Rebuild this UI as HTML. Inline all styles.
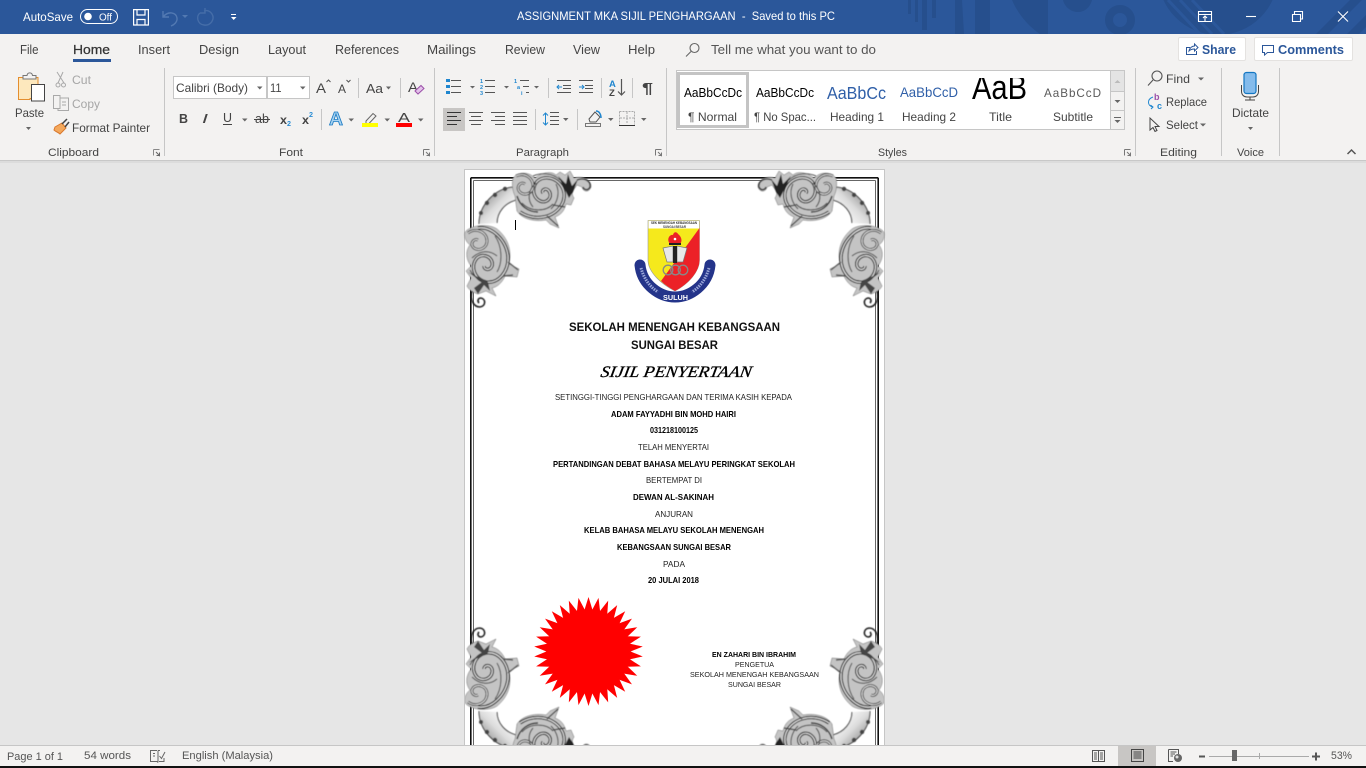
<!DOCTYPE html>
<html><head><meta charset="utf-8"><title>Word</title>
<style>
html,body{margin:0;padding:0;width:1366px;height:768px;overflow:hidden;background:#e6e6e6}
svg{display:block}
text{font-family:"Liberation Sans",sans-serif;font-size:12px;fill:#444;white-space:pre}
.t{fill:#fff}
.tab{font-size:12.5px;fill:#444}
.lab{font-size:11px;fill:#444}
.sm{font-size:12px;fill:#444}
.dim{fill:#a6a6a6}
.d1{font-size:8.5px;fill:#222}
.d2{font-size:8.5px;fill:#000;font-weight:bold}
.d3{font-size:7.5px;fill:#222}
.ic{fill:none;stroke:#555;stroke-width:1}
.st{font-size:12px;fill:#555}
</style></head><body>
<svg width="1366" height="768" viewBox="0 0 1366 768" xmlns="http://www.w3.org/2000/svg">
<defs>
<clipPath id="tb"><rect x="0" y="0" width="1366" height="34"/></clipPath>
<clipPath id="pg"><rect x="465" y="170" width="419" height="575"/></clipPath>
<filter id="soft" x="-5%" y="-5%" width="110%" height="110%"><feGaussianBlur stdDeviation="0.45"/></filter>
<linearGradient id="arc" x1="0" y1="0" x2="1" y2="1"><stop offset="0" stop-color="#666"/><stop offset=".5" stop-color="#ddd"/><stop offset=".85" stop-color="#fff"/><stop offset="1" stop-color="#888"/></linearGradient>
<path id="spA" d="M520 212C535 222 556 218 563 202C568 188 556 176 544 178C532 180 530 196 540 201C547 204 553 197 549 191C546 187 541 190 543 193"/>
<path id="spA2" d="M516 176C525 172 533 178 533 186C533 194 523 197 519 191C516 186 521 181 525 184"/>
<path id="spB" d="M478 228C492 226 506 240 508 256C509 272 498 284 486 282C474 279 470 266 477 258C484 252 494 258 492 266C490 271 484 270 484 266"/>
<path id="spB2" d="M468 233C476 227 487 232 487 241C487 249 477 252 473 247C470 243 474 238 478 240"/>
<g id="corner" filter="url(#soft)">
<path d="M479 224C479 205 495 188 514 187L516 200C505 203 497 212 497 223Z" fill="url(#arc)"/>
<path d="M479 224C479 205 495 188 514 187M516 200C505 203 497 212 497 223" fill="none" stroke="#333" stroke-width="1"/>
<g fill="#444"><circle cx="481" cy="213" r="2"/><circle cx="487" cy="203" r="2.200"/><circle cx="495" cy="195" r="2.200"/><circle cx="505" cy="189" r="2.200"/></g>
<path d="M513 178C518 172 528 171 535 178C542 172 552 171 556 175L560 172L565 175L570 171L574 178C582 175 592 180 591 187C589 193 583 192 582 187L577 185C574 190 570 192 574 198L571 205L566 204C564 212 560 215 555 217L559 228L550 224L546 220C534 222 522 219 517 211L515 196C512 190 512 183 513 178Z" fill="#c4c4c4" stroke="#666" stroke-width=".5"/>
<use href="#spA" fill="none" stroke="#1c1c1c" stroke-width="3.400"/>
<use href="#spA" fill="none" stroke="#e2e2e2" stroke-width="1.200"/>
<use href="#spA2" fill="none" stroke="#2a2a2a" stroke-width="2.800"/>
<use href="#spA2" fill="none" stroke="#e8e8e8" stroke-width="1"/>
<path d="M522 203C530 212 546 212 553 204M536 183C528 190 527 200 533 207M556 184C560 192 558 202 551 209" fill="none" stroke="#444" stroke-width="1"/>
<path d="M517 196C520 206 528 212 538 212" fill="none" stroke="#333" stroke-width="1.400"/>
<path d="M533 176C540 173 552 172 560 180" fill="none" stroke="#555" stroke-width="1"/>
<path d="M569 198L558 176L566 184L568 174L572 186L578 179L573 192Z" fill="#222"/>
<path d="M577 180C584 177 591 181 590 187C588 191 584 190 583 187" fill="none" stroke="#333" stroke-width="1.400"/>
<path d="M553 205L565 207M547 216L558 226" stroke="#444" stroke-width="1.200" fill="none"/>
<path d="M465 232C472 224 490 224 497 229C508 238 512 250 509 264L519 269L517 277L505 276C502 283 497 287 492 288L496 296L486 291L478 294C472 292 469 290 467 286L471 278L466 271L471 266C465 258 466 250 470 245C465 241 464 236 465 232Z" fill="#c4c4c4" stroke="#666" stroke-width=".5"/>
<use href="#spB" fill="none" stroke="#1c1c1c" stroke-width="3.400"/>
<use href="#spB" fill="none" stroke="#e2e2e2" stroke-width="1.200"/>
<use href="#spB2" fill="none" stroke="#2a2a2a" stroke-width="2.800"/>
<use href="#spB2" fill="none" stroke="#e8e8e8" stroke-width="1"/>
<path d="M495 236C502 246 503 262 497 272M472 258C480 250 490 250 497 256M470 270C473 276 478 280 484 280" fill="none" stroke="#444" stroke-width="1"/>
<path d="M508 262L518 270M503 276L513 275" stroke="#555" stroke-width="1.400" fill="none"/>
<path d="M468 272L482 282L474 288L478 294L484 285L490 291L488 282Z" fill="#444"/>
<path d="M472 291C470 299 473 307 480 307C486 306 486 299 481 298C478 298 477 301 479 303" fill="none" stroke="#222" stroke-width="1.600"/>
</g>
<polygon id="sp" points="-4.200,-41 0,-54.500 4.200,-41"/>
</defs>

<!-- background regions -->
<rect x="0" y="0" width="1366" height="768" fill="#e6e6e6"/>
<rect x="0" y="0" width="1366" height="34" fill="#2b579a"/>
<rect x="0" y="34" width="1366" height="126" fill="#f3f2f1"/>
<rect x="0" y="160" width="1366" height="1" fill="#c8c8c8"/>
<rect x="0" y="161" width="1366" height="2" fill="#dcdcdc"/>

<!-- title bar pattern -->
<g clip-path="url(#tb)">
<g fill="#264f8d">
<rect x="908" y="0" width="3" height="14"/><rect x="915" y="0" width="3" height="22"/><rect x="922" y="0" width="5" height="30"/><rect x="932" y="0" width="4" height="18"/>
<path d="M955 0H962L964 34H955Z"/><rect x="975" y="0" width="15" height="34"/><path d="M1012 0H1048V34H1040C1028 26 1018 14 1012 0Z"/>
<path d="M1063 0C1065 8 1072 12 1078 12C1084 12 1090 8 1092 0Z"/>
<circle cx="1120" cy="20" r="11" fill="none" stroke="#264f8d" stroke-width="8"/>
<circle cx="1218" cy="-25" r="60"/>
<path d="M1347 34L1366 15V27L1359 34Z"/><path d="M1328 34L1362 0H1350L1316 34Z"/>
</g>
<path d="M1168 0L1200 34M1180 0L1212 34M1192 0L1224 34" stroke="#2b579a" stroke-width="3" fill="none"/>
</g>

<!-- title bar items -->
<text x="23" y="21" class="t" textLength="50" lengthAdjust="spacingAndGlyphs">AutoSave</text>
<rect x="80.500" y="9.500" width="37" height="14" rx="7" fill="none" stroke="#fff"/>
<circle cx="88" cy="16.500" r="3.800" fill="#fff"/>
<text x="99" y="20.500" class="t" style="font-size:10px" textLength="13" lengthAdjust="spacingAndGlyphs">Off</text>
<g fill="none" stroke="#fff" stroke-width="1.200"><path d="M133.600 9.600H148.400V25H133.600Z"/><path d="M137 9.600V15H145V9.600M137 25V19.500H145V25"/></g>
<g fill="none" stroke="#5279b2" stroke-width="1.400"><path d="M163 11V17H169M163.500 16.500C168 11 176 12 177 18C177.500 22 174 25 171 26"/><path d="M200 13C196 16 197 24 204 25C211 26 215 19 212 14C210 11 207 10 204 11M205 8V13H200" stroke="#456da8"/></g>
<path d="M182 15H188L185 18Z" fill="#5279b2"/>
<path d="M231 14.500H236" stroke="#fff"/><path d="M231 17H236.500L233.700 20Z" fill="#fff"/>
<text x="517" y="20" class="t" textLength="318" lengthAdjust="spacingAndGlyphs">ASSIGNMENT MKA SIJIL PENGHARGAAN  -  Saved to this PC</text>
<g fill="none" stroke="#fff" stroke-width="1.100">
<path d="M1198.500 11.500H1211.500V21.500H1198.500ZM1198.500 14.500H1211.500"/><path d="M1205 21V16M1203 18L1205 16L1207 18"/>
<path d="M1246 16.500H1256"/>
<path d="M1292.500 14.500H1300.500V21.500H1292.500ZM1294.500 14V11.500H1302.500V19H1300.500"/>
<path d="M1338 11.500L1348 21.500M1348 11.500L1338 21.500"/>
</g>

<!-- tabs -->
<text x="20" y="54" class="tab" textLength="18.500" lengthAdjust="spacingAndGlyphs">File</text>
<text x="73" y="54" class="tab" textLength="37" lengthAdjust="spacingAndGlyphs" style="fill:#333;stroke:#333;stroke-width:.25">Home</text>
<rect x="73" y="59" width="38" height="3" fill="#2b579a"/>
<text x="138" y="54" class="tab" textLength="32" lengthAdjust="spacingAndGlyphs">Insert</text>
<text x="199" y="54" class="tab" textLength="40" lengthAdjust="spacingAndGlyphs">Design</text>
<text x="268" y="54" class="tab" textLength="38" lengthAdjust="spacingAndGlyphs">Layout</text>
<text x="335" y="54" class="tab" textLength="64" lengthAdjust="spacingAndGlyphs">References</text>
<text x="427" y="54" class="tab" textLength="49" lengthAdjust="spacingAndGlyphs">Mailings</text>
<text x="505" y="54" class="tab" textLength="40" lengthAdjust="spacingAndGlyphs">Review</text>
<text x="573" y="54" class="tab" textLength="27" lengthAdjust="spacingAndGlyphs">View</text>
<text x="628" y="54" class="tab" textLength="27" lengthAdjust="spacingAndGlyphs">Help</text>
<g fill="none" stroke="#666" stroke-width="1.100"><circle cx="694.500" cy="48" r="4.500"/><path d="M691 51.500L686 56.500"/></g>
<text x="711" y="54" class="tab" textLength="165" lengthAdjust="spacingAndGlyphs" style="fill:#555">Tell me what you want to do</text>

<!-- share/comments -->
<rect x="1178.500" y="37.500" width="67" height="23" rx="1.500" fill="#fff" stroke="#e4e2e0"/>
<rect x="1254.500" y="37.500" width="98" height="23" rx="1.500" fill="#fff" stroke="#e4e2e0"/>
<g fill="none" stroke="#2b579a" stroke-width="1"><path d="M1190 47.500H1186.500V54.500H1196.500V51"/><path d="M1189 51C1189.500 48 1192 46 1194.500 46V44L1198 47.500L1194.500 51V49C1192.500 49 1190.500 49.500 1189 51Z"/><path d="M1262.500 45.500H1273.500V52.500H1267.500L1264.500 55V52.500H1262.500Z"/></g>
<text x="1202" y="54" style="font-size:13px;font-weight:bold;fill:#2b579a" textLength="34" lengthAdjust="spacingAndGlyphs">Share</text>
<text x="1278" y="54" style="font-size:13px;font-weight:bold;fill:#2b579a" textLength="66" lengthAdjust="spacingAndGlyphs">Comments</text>

<!-- separators -->
<g fill="#c6c6c6"><rect x="164" y="68" width="1" height="88"/><rect x="434" y="68" width="1" height="88"/><rect x="666" y="68" width="1" height="88"/><rect x="1135" y="68" width="1" height="88"/><rect x="1221" y="68" width="1" height="88"/><rect x="1279" y="68" width="1" height="88"/></g>

<!-- clipboard -->
<path d="M18.500 77.500H38V98.500H30V99.500H18.500Z" fill="#fde8bd" stroke="#e48e2e"/>
<path d="M23 75.500H27C27.500 72 32 72 32.500 75.500H36V79H23Z" fill="#f3f2f1" stroke="#777"/>
<rect x="31.500" y="84.500" width="13" height="16.500" fill="#fff" stroke="#444"/>
<text x="15" y="117" class="sm" textLength="29" lengthAdjust="spacingAndGlyphs">Paste</text>
<path d="M26 127H31L28.500 130Z" fill="#666"/>
<g fill="none" stroke="#a9a9a9"><path d="M57 72L64 83M63 72L58 83"/><circle cx="58" cy="85" r="2"/><circle cx="63.500" cy="85" r="2"/><path d="M53.500 95.500H60V108.500H53.500ZM60 98H68.500V110.500H58V108.500M62 102H66M62 105H66"/></g>
<text x="72" y="84" class="sm dim" textLength="19" lengthAdjust="spacingAndGlyphs">Cut</text>
<text x="72" y="108" class="sm dim" textLength="28" lengthAdjust="spacingAndGlyphs">Copy</text>
<path d="M55 127L62 123L66 128L60 134C58 132 56 132 54 130Z" fill="#f4a85c" stroke="#d9782d"/>
<path d="M62 124L67 119M65 127L69 122" stroke="#444" stroke-width="1.500"/>
<text x="72" y="132" class="sm" textLength="78" lengthAdjust="spacingAndGlyphs">Format Painter</text>
<text x="48" y="156" class="lab" textLength="51" lengthAdjust="spacingAndGlyphs">Clipboard</text>
<path d="M153.500 149.500H159.500M153.500 149.500V155.500" fill="none" stroke="#888"/><path d="M156 152L159.500 155.500V152.500M159.500 155.500H156.500" stroke="#666" fill="none"/>

<!-- font -->
<rect x="173.500" y="76.500" width="93" height="22" fill="#fff" stroke="#c6c6c6"/>
<rect x="267.500" y="76.500" width="42" height="22" fill="#fff" stroke="#c6c6c6"/>
<text x="176" y="92" class="sm" textLength="72" lengthAdjust="spacingAndGlyphs">Calibri (Body)</text>
<text x="270" y="92" class="sm" textLength="11.500" lengthAdjust="spacingAndGlyphs">11</text>
<path d="M257 86.500H262.500L259.800 89.500ZM300 86.500H305.500L302.800 89.500Z" fill="#666"/>
<text x="316" y="93" style="font-size:14px" textLength="10" lengthAdjust="spacingAndGlyphs">A</text>
<path d="M326.500 82L328.500 80L330.500 82" class="ic"/>
<text x="338" y="93" style="font-size:11.500px" textLength="8" lengthAdjust="spacingAndGlyphs">A</text>
<path d="M346.500 80L348.500 82L350.500 80" class="ic"/>
<rect x="358" y="78" width="1" height="20" fill="#c6c6c6"/>
<text x="366" y="93" style="font-size:13px" textLength="17" lengthAdjust="spacingAndGlyphs">Aa</text>
<path d="M386 86.500H391L388.500 89.500Z" fill="#666"/>
<rect x="400" y="78" width="1" height="20" fill="#c6c6c6"/>
<text x="408" y="92" style="font-size:14px" textLength="10" lengthAdjust="spacingAndGlyphs">A</text>
<path d="M415 91L421 85.500L424 88.500L418 94Z" fill="#e3c3ea" stroke="#9b4fa8"/>
<text x="179" y="123" style="font-weight:bold;font-size:12.500px;fill:#444" textLength="9" lengthAdjust="spacingAndGlyphs">B</text>
<text x="202" y="123" style="font-style:italic;font-size:12.500px" textLength="6" lengthAdjust="spacingAndGlyphs">I</text>
<text x="223" y="122" style="font-size:12.500px" textLength="9" lengthAdjust="spacingAndGlyphs">U</text>
<rect x="223" y="124" width="9" height="1" fill="#444"/>
<path d="M242 118.500H247.500L244.800 121.500Z" fill="#666"/>
<text x="255" y="123" style="font-size:12.500px" textLength="14" lengthAdjust="spacingAndGlyphs">ab</text>
<rect x="254" y="119" width="16" height="1" fill="#444"/>
<text x="280" y="124" style="font-weight:bold;font-size:11.500px" textLength="7" lengthAdjust="spacingAndGlyphs">x</text>
<text x="287" y="126" style="font-size:7px;fill:#2a8dd4;font-weight:bold" textLength="4" lengthAdjust="spacingAndGlyphs">2</text>
<text x="302" y="124" style="font-weight:bold;font-size:11.500px" textLength="7" lengthAdjust="spacingAndGlyphs">x</text>
<text x="309" y="117" style="font-size:7px;fill:#2a8dd4;font-weight:bold" textLength="4" lengthAdjust="spacingAndGlyphs">2</text>
<rect x="321" y="109" width="1" height="21" fill="#c6c6c6"/>
<text x="329" y="125" style="font-size:18px;font-weight:bold;fill:#a8d3f1;stroke:#1b7bc4;stroke-width:.8" textLength="14" lengthAdjust="spacingAndGlyphs">A</text>
<path d="M348.500 118.500H354L351.200 121.500Z" fill="#666"/>
<path d="M366 121L373 113.500L376 116L369 123.500H366Z" fill="#f3f2f1" stroke="#666"/>
<rect x="362" y="123" width="16" height="4" fill="#ffff00"/>
<path d="M384.500 118.500H390L387.200 121.500Z" fill="#666"/>
<text x="398" y="122" style="font-size:13px" textLength="12" lengthAdjust="spacingAndGlyphs">A</text>
<rect x="396" y="123" width="16" height="4" fill="#ff0000"/>
<path d="M418 118.500H423.500L420.800 121.500Z" fill="#666"/>
<text x="279" y="156" class="lab" textLength="24" lengthAdjust="spacingAndGlyphs">Font</text>
<path d="M423.500 149.500H429.500M423.500 149.500V155.500M426 152L429.500 155.500V152.500M429.500 155.500H426.500" stroke="#777" fill="none"/>

<!-- paragraph -->
<g fill="#1f86cf"><rect x="446" y="79" width="4" height="3"/><rect x="446" y="85" width="4" height="3"/><rect x="446" y="91" width="4" height="3"/></g>
<path d="M451 80.500H461M451 86.500H461M451 92.500H461" stroke="#555"/>
<path d="M470 86H475L472.500 88.500ZM504 86H509L506.500 88.500ZM534 86H539L536.500 88.500Z" fill="#666"/>
<g style="font-weight:bold"><text x="480" y="83" style="font-size:5.500px;fill:#1f86cf">1</text><text x="480" y="89" style="font-size:5.500px;fill:#1f86cf">2</text><text x="480" y="95" style="font-size:5.500px;fill:#1f86cf">3</text></g>
<path d="M485 80.500H495M485 86.500H495M485 92.500H495" stroke="#555"/>
<text x="514" y="83" style="font-size:5.500px;fill:#1f86cf;font-weight:bold">1</text><text x="517" y="89" style="font-size:5.500px;fill:#1f86cf;font-weight:bold">a</text><text x="521" y="95" style="font-size:5.500px;fill:#1f86cf;font-weight:bold">i</text>
<path d="M520 80.500H529M523 86.500H529M526 92.500H529" stroke="#555"/>
<rect x="548" y="78" width="1" height="20" fill="#c6c6c6"/>
<path d="M557 80.500H571M563 85.500H571M563 88.500H571M557 92.500H571" stroke="#555"/><path d="M562 87H557M559 85L557 87L559 89" stroke="#1f86cf" fill="none"/>
<path d="M579 80.500H593M585 85.500H593M585 88.500H593M579 92.500H593" stroke="#555"/><path d="M579 87H584M582 85L584 87L582 89" stroke="#1f86cf" fill="none"/>
<rect x="601" y="78" width="1" height="20" fill="#c6c6c6"/>
<text x="609" y="87" style="font-size:9.500px;font-weight:bold;fill:#1f86cf">A</text>
<text x="609" y="96" style="font-size:9.500px;font-weight:bold;fill:#444">Z</text>
<path d="M621.500 79V95M618 91.500L621.500 95L625 91.500" stroke="#555" fill="none" stroke-width="1.200"/>
<rect x="632" y="78" width="1" height="20" fill="#c6c6c6"/>
<text x="642" y="93" style="font-size:15px;font-weight:bold;fill:#444" textLength="11" lengthAdjust="spacingAndGlyphs">¶</text>
<rect x="443" y="108" width="22" height="23" fill="#c8c6c4"/>
<path d="M447 112.500H461M447 116.500H457M447 120.500H461M447 124.500H457" stroke="#333"/>
<path d="M469 112.500H483M471 116.500H481M469 120.500H483M471 124.500H481M491 112.500H505M495 116.500H505M491 120.500H505M495 124.500H505M513 112.500H527M513 116.500H527M513 120.500H527M513 124.500H527" stroke="#555"/>
<rect x="535" y="109" width="1" height="21" fill="#c6c6c6"/>
<path d="M545.500 113V125M543 115.500L545.500 113L548 115.500M543 122.500L545.500 125L548 122.500" stroke="#1f86cf" fill="none"/>
<path d="M550 112.500H559M550 116.500H559M550 120.500H559M550 124.500H559" stroke="#555"/>
<path d="M563 118H568.500L565.800 121Z" fill="#666"/>
<rect x="577" y="109" width="1" height="21" fill="#c6c6c6"/>
<path d="M589 119L595 112L600 117L596 122H590Z" fill="#f3f2f1" stroke="#555"/>
<path d="M596 111C599 111 601 114 601 118" fill="none" stroke="#1f86cf" stroke-width="1.500"/>
<rect x="585.500" y="123.500" width="15" height="3" fill="#f3f2f1" stroke="#777"/>
<path d="M608 118H613.500L610.800 121Z" fill="#666"/>
<path d="M619.500 111.500H634.500V124.500M619.500 111.500V124.500M627 112V124M620 118H634" fill="none" stroke="#aaa" stroke-dasharray="2 1"/>
<path d="M619 125.500H635" stroke="#333"/>
<path d="M641 118H646.500L643.800 121Z" fill="#666"/>
<text x="516" y="156" class="lab" textLength="53" lengthAdjust="spacingAndGlyphs">Paragraph</text>
<path d="M655.500 149.500H661.500M655.500 149.500V155.500M658 152L661.500 155.500V152.500M661.500 155.500H658.500" stroke="#777" fill="none"/>

<!-- styles gallery -->
<rect x="676.500" y="70.500" width="448" height="59" fill="#fff" stroke="#c6c6c6"/>
<rect x="678.500" y="73.500" width="69" height="53" fill="#fff" stroke="#c4c4c4" stroke-width="3"/>
<text x="684" y="97" style="font-size:12.500px;fill:#000" textLength="58" lengthAdjust="spacingAndGlyphs">AaBbCcDc</text>
<text x="756" y="97" style="font-size:12.500px;fill:#000" textLength="58" lengthAdjust="spacingAndGlyphs">AaBbCcDc</text>
<text x="827" y="99" style="font-size:17.500px;fill:#2f5fa8" textLength="59" lengthAdjust="spacingAndGlyphs">AaBbCc</text>
<text x="900" y="97" style="font-size:14px;fill:#2f5fa8" textLength="58" lengthAdjust="spacingAndGlyphs">AaBbCcD</text>
<text x="972" y="99" style="font-size:34px;fill:#000" textLength="55" lengthAdjust="spacingAndGlyphs">AaB</text>
<text x="1044" y="97" style="font-size:12px;fill:#5a5a5a;letter-spacing:1px" textLength="58" lengthAdjust="spacingAndGlyphs">AaBbCcD</text>
<rect x="968" y="71" width="62" height="7" fill="#fff"/>
<text x="688" y="121" class="sm" textLength="49" lengthAdjust="spacingAndGlyphs">¶ Normal</text>
<text x="754" y="121" class="sm" textLength="62" lengthAdjust="spacingAndGlyphs">¶ No Spac...</text>
<text x="830" y="121" class="sm" textLength="54" lengthAdjust="spacingAndGlyphs">Heading 1</text>
<text x="902" y="121" class="sm" textLength="54" lengthAdjust="spacingAndGlyphs">Heading 2</text>
<text x="989" y="121" class="sm" textLength="23" lengthAdjust="spacingAndGlyphs">Title</text>
<text x="1053" y="121" class="sm" textLength="40" lengthAdjust="spacingAndGlyphs">Subtitle</text>
<rect x="1110.500" y="70.500" width="14" height="59" fill="#f3f2f1" stroke="#c6c6c6"/>
<rect x="1111" y="71" width="13" height="20" fill="#e4e4e4"/>
<path d="M1110 91.500H1125M1110 110.500H1125" stroke="#c6c6c6"/>
<path d="M1114.500 83L1117.500 80L1120.500 83Z" fill="#bbb"/>
<path d="M1114.500 100H1120.500L1117.500 103Z" fill="#666"/>
<path d="M1114 117.500H1121" stroke="#666"/><path d="M1114.500 120H1120.500L1117.500 123Z" fill="#666"/>
<text x="878" y="156" class="lab" textLength="29" lengthAdjust="spacingAndGlyphs">Styles</text>
<path d="M1124.500 149.500H1130.500M1124.500 149.500V155.500M1127 152L1130.500 155.500V152.500M1130.500 155.500H1127.500" stroke="#777" fill="none"/>

<!-- editing -->
<g fill="none" stroke="#555" stroke-width="1.100"><circle cx="1157" cy="76" r="5"/><path d="M1153 80L1148 85.500"/></g>
<text x="1166" y="83" class="sm" textLength="24" lengthAdjust="spacingAndGlyphs">Find</text>
<path d="M1198 77.500H1204L1201 80.500Z" fill="#666"/>
<text x="1154" y="100" style="font-size:9px;fill:#9b4fa8;font-weight:bold">b</text>
<text x="1157" y="109" style="font-size:9px;fill:#1f86cf;font-weight:bold">c</text>
<path d="M1153 97C1147 99 1147 106 1153 107M1150.500 105L1153 107L1151 109" stroke="#1f86cf" fill="none"/>
<text x="1166" y="106" class="sm" textLength="41" lengthAdjust="spacingAndGlyphs">Replace</text>
<path d="M1150 118V130L1153 127.500L1155 131.500L1157 130.500L1155 126.500H1159Z" fill="#f3f2f1" stroke="#444"/>
<text x="1166" y="129" class="sm" textLength="32" lengthAdjust="spacingAndGlyphs">Select</text>
<path d="M1200 123.500H1206L1203 126.500Z" fill="#666"/>
<text x="1160" y="156" class="lab" textLength="37" lengthAdjust="spacingAndGlyphs">Editing</text>

<!-- voice -->
<rect x="1244" y="72.500" width="12" height="21" rx="2.500" fill="#85bcec" stroke="#1577c2" stroke-width="1.200"/>
<path d="M1241.500 85V91C1241.500 95 1244 97 1247 97H1253C1256 97 1258.500 95 1258.500 91V85" fill="none" stroke="#444"/>
<path d="M1250 97V100M1245 100H1255" stroke="#444"/>
<text x="1232" y="117" class="sm" textLength="37" lengthAdjust="spacingAndGlyphs">Dictate</text>
<path d="M1248 127H1253L1250.500 130Z" fill="#666"/>
<text x="1237" y="156" class="lab" textLength="27" lengthAdjust="spacingAndGlyphs">Voice</text>
<path d="M1347.500 154L1351.500 150L1355.500 154" fill="none" stroke="#555" stroke-width="1.500"/>

<!-- page -->
<rect x="464.500" y="169.500" width="420" height="600" fill="#fff" stroke="#c6c6c6"/>
<g fill="none">
<path d="M470.800 177.800V745M470.800 177.800H878.200M878.200 177.800V745" stroke-width="1.600" stroke="#111"/>
<path d="M473.500 180.500V745M473.500 180.500H875.500M875.500 180.500V745" stroke-width="1" stroke="#666"/>
</g>
<use href="#corner"/>
<use href="#corner" transform="translate(1349 0) scale(-1 1)"/>
<g clip-path="url(#pg)">
<use href="#corner" transform="translate(0 935) scale(1 -1)"/>
<use href="#corner" transform="translate(1349 935) scale(-1 -1)"/>
</g>
<rect x="515" y="220" width="1" height="10" fill="#000"/>

<!-- logo -->
<path d="M640 265C642 285 660 297 675 297C690 297 708 285 710 265" fill="none" stroke="#24348a" stroke-width="11" stroke-linecap="round"/>
<path d="M648 220.500H699.500V260C699.500 272 688 284 675 291C661 284 648 272 648 260Z" fill="#f5e91c" stroke="#999" stroke-width=".6"/>
<path d="M699.500 228V260C699.500 272 688 284 675 291C670 288 665 285 661 281Z" fill="#ec2127"/>
<rect x="648.500" y="221" width="50.500" height="7.500" fill="#fff"/>
<text x="651" y="224" style="font-size:3.500px;font-weight:bold;fill:#333" textLength="46" lengthAdjust="spacingAndGlyphs">SEK MENENGAH KEBANGSAAN</text>
<text x="663" y="228" style="font-size:3.500px;font-weight:bold;fill:#444" textLength="23" lengthAdjust="spacingAndGlyphs">SUNGAI BESAR</text>
<path d="M670 244C666 239 670 234 673 235C674 231 677 232 678 234C681 236 683 241 680 244Z" fill="#ec2127"/>
<rect x="669" y="243" width="12" height="2" fill="#222"/><circle cx="675" cy="239" r="1.300" fill="#fff"/>
<path d="M663 248L673 246V262H667ZM687 248L677 246V262H683Z" fill="#e8e8e8" stroke="#777" stroke-width=".7"/>
<rect x="673" y="246" width="4" height="17" fill="#222"/>
<g fill="none" stroke="#888" stroke-width="1.300"><circle cx="668" cy="270" r="4.800"/><circle cx="675.500" cy="270" r="4.800"/><circle cx="683" cy="270" r="4.800"/></g>
<text x="663" y="300" style="font-size:7.500px;font-weight:bold;fill:#fff" textLength="25" lengthAdjust="spacingAndGlyphs">SULUH</text>
<path d="M641 268C644 279 650 287 658 292" stroke="#9aa6d8" stroke-width="3" fill="none" stroke-dasharray="1.500 1"/>
<path d="M709 268C706 279 700 287 692 292" stroke="#9aa6d8" stroke-width="3" fill="none" stroke-dasharray="1.500 1"/>

<!-- document text -->
<text x="569" y="331" style="font-size:12px;fill:#111;font-weight:bold" textLength="211" lengthAdjust="spacingAndGlyphs">SEKOLAH MENENGAH KEBANGSAAN</text>
<text x="631" y="349" style="font-size:12px;fill:#111;font-weight:bold" textLength="87" lengthAdjust="spacingAndGlyphs">SUNGAI BESAR</text>
<g transform="translate(600 377) skewX(-10)"><text x="0" y="0" style="font-family:'Liberation Serif',serif;font-size:16px;font-style:italic;fill:#000;stroke:#000;stroke-width:.3" textLength="151" lengthAdjust="spacingAndGlyphs">SIJIL PENYERTAAN</text></g>
<text x="555" y="400" class="d1" textLength="237" lengthAdjust="spacingAndGlyphs">SETINGGI-TINGGI PENGHARGAAN DAN TERIMA KASIH KEPADA</text>
<text x="611" y="417" class="d2" textLength="125" lengthAdjust="spacingAndGlyphs">ADAM FAYYADHI BIN MOHD HAIRI</text>
<text x="650" y="433" class="d2" textLength="48" lengthAdjust="spacingAndGlyphs">031218100125</text>
<text x="638" y="450" class="d1" textLength="71" lengthAdjust="spacingAndGlyphs">TELAH MENYERTAI</text>
<text x="553" y="467" class="d2" textLength="242" lengthAdjust="spacingAndGlyphs">PERTANDINGAN DEBAT BAHASA MELAYU PERINGKAT SEKOLAH</text>
<text x="646" y="483" class="d1" textLength="56" lengthAdjust="spacingAndGlyphs">BERTEMPAT DI</text>
<text x="633" y="500" class="d2" textLength="81" lengthAdjust="spacingAndGlyphs">DEWAN AL-SAKINAH</text>
<text x="655" y="517" class="d1" textLength="38" lengthAdjust="spacingAndGlyphs">ANJURAN</text>
<text x="584" y="533" class="d2" textLength="180" lengthAdjust="spacingAndGlyphs">KELAB BAHASA MELAYU SEKOLAH MENENGAH</text>
<text x="617" y="550" class="d2" textLength="114" lengthAdjust="spacingAndGlyphs">KEBANGSAAN SUNGAI BESAR</text>
<text x="663" y="567" class="d1" textLength="22" lengthAdjust="spacingAndGlyphs">PADA</text>
<text x="648" y="583" class="d2" textLength="51" lengthAdjust="spacingAndGlyphs">20 JULAI 2018</text>
<text x="712" y="657" class="d3" style="font-weight:bold;fill:#000" textLength="84" lengthAdjust="spacingAndGlyphs">EN ZAHARI BIN IBRAHIM</text>
<text x="735" y="667" class="d3" textLength="39" lengthAdjust="spacingAndGlyphs">PENGETUA</text>
<text x="690" y="677" class="d3" textLength="129" lengthAdjust="spacingAndGlyphs">SEKOLAH MENENGAH KEBANGSAAN</text>
<text x="728" y="687" class="d3" textLength="53" lengthAdjust="spacingAndGlyphs">SUNGAI BESAR</text>

<!-- seal -->
<g transform="translate(588.500 651.500)" fill="#ff0000">
<circle r="41.500"/>
<use href="#sp"/><use href="#sp" transform="rotate(10.59)"/><use href="#sp" transform="rotate(21.18)"/><use href="#sp" transform="rotate(31.76)"/><use href="#sp" transform="rotate(42.35)"/><use href="#sp" transform="rotate(52.94)"/><use href="#sp" transform="rotate(63.53)"/><use href="#sp" transform="rotate(74.12)"/><use href="#sp" transform="rotate(84.71)"/><use href="#sp" transform="rotate(95.29)"/><use href="#sp" transform="rotate(105.88)"/><use href="#sp" transform="rotate(116.47)"/><use href="#sp" transform="rotate(127.06)"/><use href="#sp" transform="rotate(137.65)"/><use href="#sp" transform="rotate(148.24)"/><use href="#sp" transform="rotate(158.82)"/><use href="#sp" transform="rotate(169.41)"/><use href="#sp" transform="rotate(180)"/><use href="#sp" transform="rotate(190.59)"/><use href="#sp" transform="rotate(201.18)"/><use href="#sp" transform="rotate(211.76)"/><use href="#sp" transform="rotate(222.35)"/><use href="#sp" transform="rotate(232.94)"/><use href="#sp" transform="rotate(243.53)"/><use href="#sp" transform="rotate(254.12)"/><use href="#sp" transform="rotate(264.71)"/><use href="#sp" transform="rotate(275.29)"/><use href="#sp" transform="rotate(285.88)"/><use href="#sp" transform="rotate(296.47)"/><use href="#sp" transform="rotate(307.06)"/><use href="#sp" transform="rotate(317.65)"/><use href="#sp" transform="rotate(328.24)"/><use href="#sp" transform="rotate(338.82)"/><use href="#sp" transform="rotate(349.41)"/>
</g>

<!-- status bar -->
<rect x="0" y="745" width="1366" height="21" fill="#f3f2f1"/>
<rect x="0" y="745" width="1366" height="1" fill="#c6c6c6"/>
<rect x="0" y="766" width="1366" height="2" fill="#111"/>
<text x="7" y="760" class="st" style="font-size:11px" textLength="56" lengthAdjust="spacingAndGlyphs">Page 1 of 1</text>
<text x="84" y="759" class="st" style="font-size:11px" textLength="47" lengthAdjust="spacingAndGlyphs">54 words</text>
<path d="M157 750.500H150.500V761.500H157L158 762.500M158 750.500V762.500M158 750.500H160M153 753.500H155M153 756H155" fill="none" stroke="#666"/>
<path d="M159.500 756L161.500 758.500L165 752" fill="none" stroke="#666"/><path d="M164 758V761.500H159" fill="none" stroke="#666"/>
<text x="182" y="759" class="st" style="font-size:11px" textLength="91" lengthAdjust="spacingAndGlyphs">English (Malaysia)</text>
<rect x="1118" y="746" width="38" height="20" fill="#c8c6c4"/>
<path d="M1092.500 750.500H1104.500V761.500H1092.500ZM1098.500 750.500V761.500M1094 753H1097M1094 755H1097M1094 757H1097M1094 759H1097M1100 753H1103M1100 755H1103M1100 757H1103M1100 759H1103" fill="none" stroke="#555"/>
<path d="M1131.500 749.500H1143.500V761.500H1131.500ZM1133.500 752H1141.500M1133.500 754H1141.500M1133.500 756H1141.500M1133.500 758H1141.500" fill="none" stroke="#444"/>
<path d="M1168.500 749.500H1178.500V754M1168.500 749.500V761.500H1173M1170.500 752H1176.500M1170.500 754H1175M1170.500 756H1173" fill="none" stroke="#555"/>
<circle cx="1178" cy="758" r="4" fill="#666"/><circle cx="1177" cy="757" r="1.500" fill="#ddd"/>
<path d="M1199 756.500H1205" stroke="#555" stroke-width="2"/>
<rect x="1209" y="756" width="100" height="1" fill="#aaa"/><rect x="1259" y="753" width="1" height="6" fill="#aaa"/>
<rect x="1232" y="750" width="5" height="11" fill="#666"/>
<path d="M1312 756.500H1320M1316 752.500V760.500" stroke="#555" stroke-width="2"/>
<text x="1331" y="759" class="st" style="font-size:11px" textLength="21" lengthAdjust="spacingAndGlyphs">53%</text>
</svg>
</body></html>
